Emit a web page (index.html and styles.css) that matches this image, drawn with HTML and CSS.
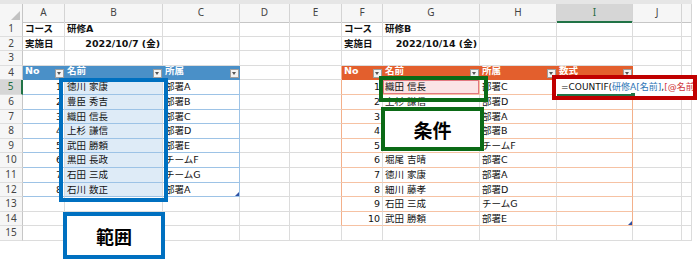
FILE: index.html
```html
<!DOCTYPE html>
<html lang="ja">
<head>
<meta charset="utf-8">
<title>COUNTIF</title>
<link rel="stylesheet" href="styles.css">
</head>
<body>
<div class="sheet">
  <div class="topbar"></div>

  <div class="row hdr">
    <div class="c corner"></div>
    <div class="c ch">A</div>
    <div class="c ch">B</div>
    <div class="c ch">C</div>
    <div class="c ch">D</div>
    <div class="c ch">E</div>
    <div class="c ch">F</div>
    <div class="c ch">G</div>
    <div class="c ch">H</div>
    <div class="c ch on">I</div>
    <div class="c ch">J</div>
    <div class="c ch"></div>
  </div>

  <div class="row">
    <div class="c rh">1</div>
    <div class="c b">コース</div>
    <div class="c b">研修A</div>
    <div class="c"></div>
    <div class="c"></div>
    <div class="c"></div>
    <div class="c b">コース</div>
    <div class="c b">研修B</div>
    <div class="c"></div>
    <div class="c"></div>
    <div class="c"></div>
    <div class="c"></div>
  </div>

  <div class="row">
    <div class="c rh">2</div>
    <div class="c b">実施日</div>
    <div class="c b n">2022/10/7 (金)</div>
    <div class="c"></div>
    <div class="c"></div>
    <div class="c"></div>
    <div class="c b">実施日</div>
    <div class="c b n">2022/10/14 (金)</div>
    <div class="c"></div>
    <div class="c"></div>
    <div class="c"></div>
    <div class="c"></div>
  </div>

  <div class="row">
    <div class="c rh">3</div>
    <div class="c"></div>
    <div class="c"></div>
    <div class="c"></div>
    <div class="c"></div>
    <div class="c"></div>
    <div class="c"></div>
    <div class="c"></div>
    <div class="c"></div>
    <div class="c"></div>
    <div class="c"></div>
    <div class="c"></div>
  </div>

  <div class="row">
    <div class="c rh">4</div>
    <div class="c th bh"><span>No</span><i class="btn"></i></div>
    <div class="c th bh"><span>名前</span><i class="btn"></i></div>
    <div class="c th bh"><span>所属</span><i class="btn"></i></div>
    <div class="c"></div>
    <div class="c el"></div>
    <div class="c th oh"><span>No</span><i class="btn"></i></div>
    <div class="c th oh"><span>名前</span><i class="btn"></i></div>
    <div class="c th oh"><span>所属</span><i class="btn"></i></div>
    <div class="c th oh"><span>数式</span><i class="btn"></i></div>
    <div class="c"></div>
    <div class="c"></div>
  </div>

  <div class="row">
    <div class="c rh on">5</div>
    <div class="c n bt">1</div>
    <div class="c bt sel">徳川 家康</div>
    <div class="c bt be">部署A</div>
    <div class="c"></div>
    <div class="c el"></div>
    <div class="c n ot">1</div>
    <div class="c pk">織田 信長</div>
    <div class="c ot">部署C</div>
    <div class="c ot oe"></div>
    <div class="c"></div>
    <div class="c"></div>
  </div>

  <div class="row">
    <div class="c rh">6</div>
    <div class="c n bt">2</div>
    <div class="c bt sel">豊臣 秀吉</div>
    <div class="c bt be">部署B</div>
    <div class="c"></div>
    <div class="c el"></div>
    <div class="c n ot">2</div>
    <div class="c ot">上杉 謙信</div>
    <div class="c ot">部署D</div>
    <div class="c ot oe"></div>
    <div class="c"></div>
    <div class="c"></div>
  </div>

  <div class="row">
    <div class="c rh">7</div>
    <div class="c n bt">3</div>
    <div class="c bt sel">織田 信長</div>
    <div class="c bt be">部署C</div>
    <div class="c"></div>
    <div class="c el"></div>
    <div class="c n ot">3</div>
    <div class="c ot"></div>
    <div class="c ot">部署A</div>
    <div class="c ot oe"></div>
    <div class="c"></div>
    <div class="c"></div>
  </div>

  <div class="row">
    <div class="c rh">8</div>
    <div class="c n bt">4</div>
    <div class="c bt sel">上杉 謙信</div>
    <div class="c bt be">部署D</div>
    <div class="c"></div>
    <div class="c el"></div>
    <div class="c n ot">4</div>
    <div class="c ot"></div>
    <div class="c ot">部署B</div>
    <div class="c ot oe"></div>
    <div class="c"></div>
    <div class="c"></div>
  </div>

  <div class="row">
    <div class="c rh">9</div>
    <div class="c n bt">5</div>
    <div class="c bt sel">武田 勝頼</div>
    <div class="c bt be">部署E</div>
    <div class="c"></div>
    <div class="c el"></div>
    <div class="c n ot">5</div>
    <div class="c ot"></div>
    <div class="c ot">チームF</div>
    <div class="c ot oe"></div>
    <div class="c"></div>
    <div class="c"></div>
  </div>

  <div class="row">
    <div class="c rh">10</div>
    <div class="c n bt">6</div>
    <div class="c bt sel">黒田 長政</div>
    <div class="c bt be">チームF</div>
    <div class="c"></div>
    <div class="c el"></div>
    <div class="c n ot">6</div>
    <div class="c ot">堀尾 吉晴</div>
    <div class="c ot">部署C</div>
    <div class="c ot oe"></div>
    <div class="c"></div>
    <div class="c"></div>
  </div>

  <div class="row">
    <div class="c rh">11</div>
    <div class="c n bt">7</div>
    <div class="c bt sel">石田 三成</div>
    <div class="c bt be">チームG</div>
    <div class="c"></div>
    <div class="c el"></div>
    <div class="c n ot">7</div>
    <div class="c ot">徳川 家康</div>
    <div class="c ot">部署A</div>
    <div class="c ot oe"></div>
    <div class="c"></div>
    <div class="c"></div>
  </div>

  <div class="row">
    <div class="c rh">12</div>
    <div class="c n bt">8</div>
    <div class="c bt sel">石川 数正</div>
    <div class="c bt be hdl">部署A</div>
    <div class="c"></div>
    <div class="c el"></div>
    <div class="c n ot">8</div>
    <div class="c ot">細川 藤孝</div>
    <div class="c ot">部署D</div>
    <div class="c ot oe"></div>
    <div class="c"></div>
    <div class="c"></div>
  </div>

  <div class="row">
    <div class="c rh">13</div>
    <div class="c"></div>
    <div class="c"></div>
    <div class="c"></div>
    <div class="c"></div>
    <div class="c el"></div>
    <div class="c n ot">9</div>
    <div class="c ot">石田 三成</div>
    <div class="c ot">チームG</div>
    <div class="c ot oe"></div>
    <div class="c"></div>
    <div class="c"></div>
  </div>

  <div class="row">
    <div class="c rh">14</div>
    <div class="c"></div>
    <div class="c"></div>
    <div class="c"></div>
    <div class="c"></div>
    <div class="c el"></div>
    <div class="c n ot">10</div>
    <div class="c ot">武田 勝頼</div>
    <div class="c ot">部署E</div>
    <div class="c ot oe hdl"></div>
    <div class="c"></div>
    <div class="c"></div>
  </div>

  <div class="row">
    <div class="c rh">15</div>
    <div class="c"></div>
    <div class="c"></div>
    <div class="c"></div>
    <div class="c"></div>
    <div class="c"></div>
    <div class="c"></div>
    <div class="c"></div>
    <div class="c"></div>
    <div class="c"></div>
    <div class="c"></div>
    <div class="c"></div>
  </div>

  <div class="box box-range"></div>
  <div class="label label-range">範囲</div>
  <div class="box box-cond"></div>
  <div class="label label-cond">条件</div>
  <div class="box fx"><span class="k">=COUNTIF(</span><span class="ref">研修A[名前]</span><span class="k">,</span><span class="self">[@名前</span><i class="active"></i></div>
</div>
</body>
</html>
```

FILE: styles.css
```css
* { box-sizing: border-box; }
html, body { margin: 0; padding: 0; background: #fff; }
body {
  width: 700px;
  height: 262px;
  overflow: hidden;
  font-family: "DejaVu Sans", "Noto Sans CJK JP", sans-serif;
  font-size: 9.5px;
  color: #111;
}
.sheet { position: relative; width: 692px; }
.topbar { height: 4px; background: #e6e6e6; }

.row {
  display: grid;
  grid-template-columns: 23px 42px 98px 77px 50px 52px 41px 97px 77px 76px 49px 10px;
  height: 14.6px;
}
.row.hdr { height: 18px; }

.c {
  position: relative;
  border-right: 1px solid #dcdcdc;
  border-bottom: 1px solid #dcdcdc;
  padding: 0 2px;
  line-height: 13.6px;
  white-space: nowrap;
}
.b { font-weight: bold; }
.n { text-align: right; }

/* headers */
.ch, .rh, .corner {
  background: #f6f6f6;
  color: #444;
  font-family: "Noto Sans", "DejaVu Sans", sans-serif;
  text-align: center;
  padding: 0;
}
.ch {
  font-size: 10px;
  line-height: 17px;
  border-right-color: #d4d4d4;
  border-bottom-color: #c6c6c6;
}
.rh {
  font-size: 10px;
  border-right-color: #c6c6c6;
  border-bottom-color: #dedede;
}
.corner { border-right-color: #c6c6c6; border-bottom-color: #c6c6c6; }
.corner::after {
  content: "";
  position: absolute;
  right: 2px;
  bottom: 2px;
  border-left: 9px solid transparent;
  border-bottom: 9px solid #c2c2c2;
}
.ch.on {
  background: #d6d6d6;
  color: #1d6b40;
  border-bottom: 2px solid #217346;
}
.rh.on {
  background: #d6d6d6;
  color: #1d6b40;
  border-right: 2px solid #217346;
}

/* table headers */
.th {
  display: flex;
  justify-content: space-between;
  align-items: flex-start;
  padding: 0 0 0 2px;
  color: #fff;
  font-weight: bold;
}
.th span { line-height: 10px; }
.bh { background: #4a90c8; border-right-color: #4a90c8; border-bottom-color: #4a90c8; }
.oh { background: #e35f2d; border-right-color: #e35f2d; border-bottom-color: #e35f2d; }
.btn {
  position: relative;
  align-self: flex-end;
  width: 9px;
  height: 9px;
  margin-bottom: 1px;
  background: #f3f3f3;
  border: 1px solid #9e9e9e;
}
.btn::after {
  content: "";
  position: absolute;
  left: 1px;
  top: 2px;
  border-left: 2.5px solid transparent;
  border-right: 2.5px solid transparent;
  border-top: 3px solid #555;
}

/* blue table */
.bt { border-bottom-color: #9dc3e6; }
.be { border-right-color: #9dc3e6; }
.sel { background: #deebf7; }

/* orange table */
.ot { border-bottom-color: #f6c2a3; }
.oe { border-right-color: #f3b08a; }
.el { border-right-color: #f3b08a; }
.pk {
  background: #fbe4e5;
  border-right-color: #f6c2a3;
  border-bottom-color: #f6c2a3;
  box-shadow: inset 0 0 0 1px #e27880;
}

.hdl::after {
  content: "";
  position: absolute;
  right: 0;
  bottom: 0;
  border-left: 4px solid transparent;
  border-bottom: 4px solid #2f52a5;
}

/* annotation overlays */
.box {
  position: absolute;
  border: 4px solid;
}
.box-range { left: 59px; top: 78px; width: 109px; height: 124px; border-color: #0070c0; }
.box-cond { left: 379px; top: 76px; width: 109px; height: 26px; border-color: #0b6a16; }

.label {
  position: absolute;
  display: flex;
  align-items: center;
  justify-content: center;
  background: #fff;
  border: 4px solid;
  font-family: "Noto Sans CJK JP", sans-serif;
  font-weight: bold;
  font-size: 18px;
  color: #000;
}
.label-range { left: 63px; top: 212px; width: 102px; height: 47px; border-color: #0070c0; }
.label-cond { left: 381px; top: 107px; width: 103px; height: 44px; border-color: #0b6a16; font-size: 19px; }

.fx {
  left: 552px;
  top: 75px;
  width: 145px;
  height: 25px;
  border-color: #c00000;
  background: #fff;
  overflow: hidden;
  white-space: nowrap;
  padding-left: 5px;
  line-height: 17px;
  font-size: 9px;
}
.fx .k { color: #111; }
.fx .ref { color: #2e75b6; }
.fx .self { color: #d0363b; }
.fx .active {
  position: absolute;
  left: 1px;
  bottom: 0;
  width: 76px;
  height: 2px;
  background: #217346;
}
.fx .active::after {
  content: "";
  position: absolute;
  right: -2px;
  top: -1px;
  width: 4px;
  height: 4px;
  background: #217346;
}
```
